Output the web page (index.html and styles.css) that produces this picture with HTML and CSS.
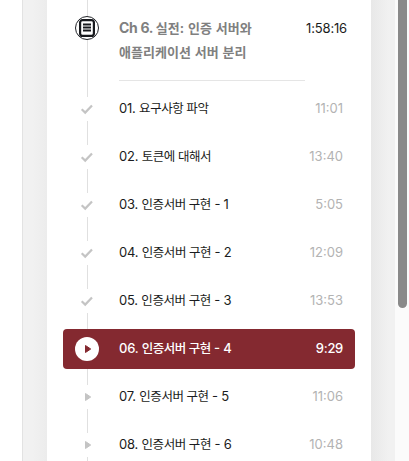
FILE: index.html
```
<!DOCTYPE html>
<html lang="ko">
<head>
<meta charset="utf-8">
<title>Ch 6. 실전</title>
<link rel="stylesheet" href="styles.css">
</head>
<body>
<div class="page">
  <div class="gutter gutter-left"></div>
  <main class="card">
    <header class="chapter">
      <span class="rail"><svg class="chapter-icon" width="26" height="26" viewBox="0 0 26 26"><circle cx="13" cy="13" r="11.5" fill="#fff" stroke="#222429" stroke-width="1"/><rect x="6.1" y="5.1" width="13.8" height="15.8" rx="2.5" fill="#fff" stroke="#17191d" stroke-width="2.2"/><path d="M9 9.5h8M9 12.5h8M9 15.5h8" stroke="#17191d" stroke-width="1.8"/></svg></span>
      <h1 class="chapter-title">Ch 6. <span class="ko">실전: 인증 서버와</span><br><span class="ko">애플리케이션 서버 분리</span></h1>
      <span class="total">1:58:16</span>
    </header>
    <ol class="lessons">
      <li class="lesson"><span class="rail"><svg class="mark" width="24" height="24" viewBox="0 0 24 24"><path class="check" d="M6.7 12.3l3.5 3.3 6.8-7"/></svg></span><span class="name">01. <span class="ko">요구사항 파악</span></span><time>11:01</time></li>
      <li class="lesson"><span class="rail"><svg class="mark" width="24" height="24" viewBox="0 0 24 24"><path class="check" d="M6.7 12.3l3.5 3.3 6.8-7"/></svg></span><span class="name">02. <span class="ko">토큰에 대해서</span></span><time>13:40</time></li>
      <li class="lesson"><span class="rail"><svg class="mark" width="24" height="24" viewBox="0 0 24 24"><path class="check" d="M6.7 12.3l3.5 3.3 6.8-7"/></svg></span><span class="name">03. <span class="ko">인증서버 구현</span> - 1</span><time>5:05</time></li>
      <li class="lesson"><span class="rail"><svg class="mark" width="24" height="24" viewBox="0 0 24 24"><path class="check" d="M6.7 12.3l3.5 3.3 6.8-7"/></svg></span><span class="name">04. <span class="ko">인증서버 구현</span> - 2</span><time>12:09</time></li>
      <li class="lesson"><span class="rail"><svg class="mark" width="24" height="24" viewBox="0 0 24 24"><path class="check" d="M6.7 12.3l3.5 3.3 6.8-7"/></svg></span><span class="name">05. <span class="ko">인증서버 구현</span> - 3</span><time>13:53</time></li>
      <li class="lesson current"><span class="rail"><svg class="mark" width="24" height="24" viewBox="0 0 24 24"><path class="play" d="M10.5 8.5v7l5.2-3.5z"/></svg></span><span class="name">06. <span class="ko">인증서버 구현</span> - 4</span><time>9:29</time></li>
      <li class="lesson"><span class="rail"><svg class="mark" width="24" height="24" viewBox="0 0 24 24"><path class="play" d="M10.5 8.5v7l5.2-3.5z"/></svg></span><span class="name">07. <span class="ko">인증서버 구현</span> - 5</span><time>11:06</time></li>
      <li class="lesson"><span class="rail"><svg class="mark" width="24" height="24" viewBox="0 0 24 24"><path class="play" d="M10.5 8.5v7l5.2-3.5z"/></svg></span><span class="name">08. <span class="ko">인증서버 구현</span> - 6</span><time>10:48</time></li>
    </ol>
  </main>
  <div class="gutter gutter-right"></div>
  <div class="scrollbar"><div class="thumb"></div></div>
</div>
</body>
</html>
```
FILE: styles.css
```
* { box-sizing: border-box; }
body { margin: 0; background: #fff; overflow: hidden; font: 13px/24px Inter, "Noto Sans CJK KR", sans-serif; color: #1a1c20; }
.page { display: flex; height: 461px; padding-left: 22px; overflow: hidden; }
.gutter { flex: none; }
.gutter-left { width: 25px; border-left: 1px solid #e2e2e2; background: linear-gradient(90deg, #f1f1f1 0 40%, #ececec); }
.gutter-right { width: 24px; background: linear-gradient(90deg, #e8e8e8, #f1f1f1 75%); }
.card { flex: none; width: 324px; padding: 0 16px; background: linear-gradient(#e0e0e0, #e0e0e0) 40px 0 / 1px 100% no-repeat #fff; }
.chapter { display: flex; height: 89px; padding-top: 16px; }
.rail { flex: none; width: 56px; padding-left: 12px; }
.chapter-icon { display: block; margin: -1px; }
.chapter-title { width: 186px; height: 65px; margin: 0; border-bottom: 1px solid #e5e5e5; font-size: 14px; line-height: 24px; font-weight: 700; color: #808080; white-space: nowrap; letter-spacing: -.3px; }
.chapter-title .ko { font-size: 13px; letter-spacing: .05px; word-spacing: .6px; }
.total { margin-left: 1px; letter-spacing: -.15px; }
.lessons { display: flex; flex-direction: column; gap: 8px; margin: 0; padding: 0; list-style: none; }
.lesson { display: flex; flex: none; align-items: center; height: 40px; padding-right: 12px; border-radius: 4px; }
.mark { display: block; background: #fff; }
.check { fill: none; stroke: #c4c4c4; stroke-width: 2.2; }
.play { fill: #c4c4c4; stroke: #c4c4c4; stroke-width: 1; stroke-linejoin: round; }
.name { flex: 1; padding-bottom: 2px; white-space: nowrap; letter-spacing: -.2px; font-feature-settings: "case"; }
.name .ko { font-size: 12.5px; letter-spacing: -.45px; }
time { padding-bottom: 2px; color: #b3b3b3; letter-spacing: 0; }
.current { background: #842930; color: #fff; font-weight: 500; }
.current .mark { border-radius: 50%; }
.current .play { fill: #842930; stroke: #842930; }
.current time { color: #fff; letter-spacing: -.3px; }
.scrollbar { width: 14px; background: #fbfbfb; padding: 0 2px 0 3px; }
.thumb { height: 308px; border-radius: 0 0 5px 5px; background: #8a8a8a; }
```
